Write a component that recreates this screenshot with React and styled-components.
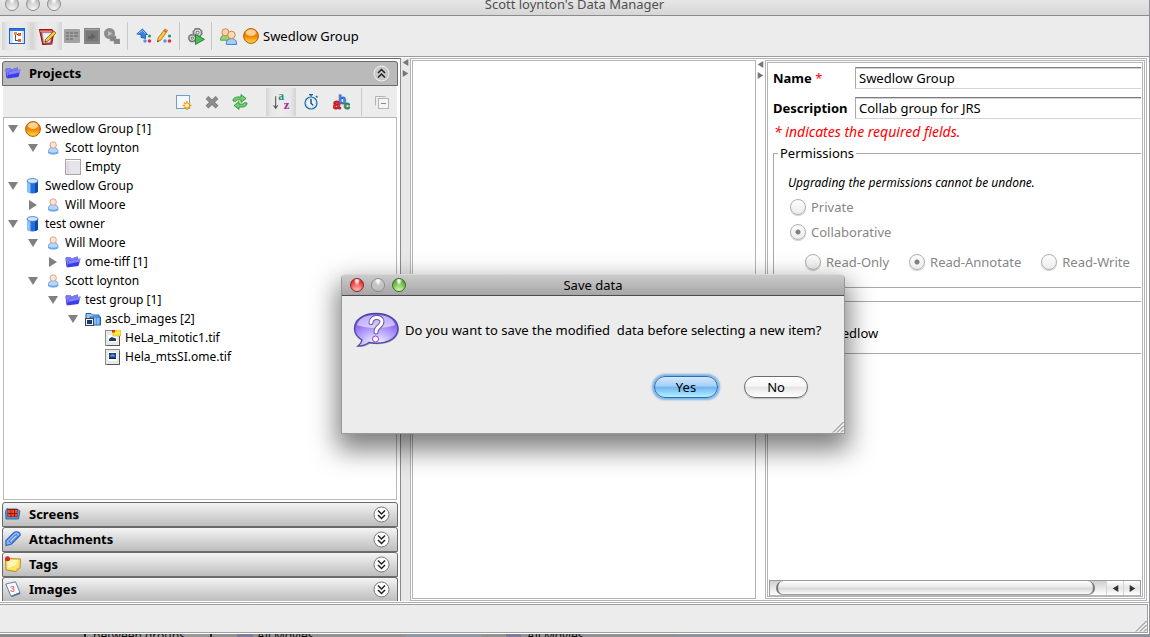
import { useState } from "react";
import styled, { createGlobalStyle } from "styled-components";

const GlobalStyle = createGlobalStyle`
  * {
    box-sizing: border-box;
  }

  body {
    margin: 0;
    background: #8f9298;
    font-family: "Noto Sans", "Open Sans", sans-serif;
    font-size: 13px;
    line-height: 18px;
    color: #000;
  }

  button,
  input {
    font: inherit;
    color: inherit;
  }
`;

const Desktop = styled.div`
  position: relative;
  display: flex;
  flex-direction: column;
  height: 100vh;
  min-height: 560px;
  overflow: hidden;
`;

const Window = styled.div`
  flex: 1;
  min-height: 0;
  display: flex;
  flex-direction: column;
  margin-right: 1px;
  background: #fff;
`;

//-------------Title bar--------------
const TitleBar = styled.header`
  display: flex;
  align-items: flex-end;
  height: 16px;
  overflow: hidden;
  background: linear-gradient(#e6e6e6, #d6d6d6);
  border-bottom: 1px solid #8c8c8c;
`;

const TitleRow = styled.div`
  flex: 1;
  display: grid;
  grid-template-columns: 64px 1fr 64px;
  align-items: center;
  height: 22px;
  color: #505050;
`;

const Title = styled.h1`
  margin: 0;
  font-size: 13px;
  font-weight: normal;
  text-align: center;
`;

const Lights = styled.div`
  display: flex;
  gap: 7px;
  padding-left: ${(p) => p.$inset};
`;

const lightColors = {
  grey: ["#f2f2f2", "#c4c4c4", "#8d8d8d"],
  off: ["#bdbdbd", "#c9c9c9", "#8a8a8a"],
  red: ["#ffb3ab", "#e8322f", "#8d2222"],
  green: ["#c9f5a0", "#5aa938", "#3a6a27"],
};

const Light = styled.button`
  flex: none;
  width: 14px;
  height: 14px;
  padding: 0;
  border: 1px solid ${(p) => lightColors[p.$tone][2]};
  border-radius: 50%;
  background: radial-gradient(
      ellipse at 50% 12%,
      rgba(255, 255, 255, 0.9) 0 12%,
      transparent 36%
    ),
    radial-gradient(
      circle at 50% 100%,
      ${(p) => lightColors[p.$tone][0]} 10%,
      ${(p) => lightColors[p.$tone][1]} 75%
    );
`;

//-------------Toolbars--------------
const MainToolbar = styled.div`
  display: flex;
  align-items: center;
  height: 41px;
  padding-left: 2px;
  background: #ececec;
  border-bottom: 1px solid #9c9c9c;
`;

const PanelToolbar = styled.div`
  display: flex;
  align-items: center;
  justify-content: flex-end;
  height: 31px;
  margin: 0 1px;
  background: #ececec;
`;

const ToolButton = styled.button`
  display: flex;
  align-items: center;
  justify-content: center;
  width: ${(p) => p.$width || "20px"};
  height: 28px;
  padding: 0;
  border: 0;
  background: ${(p) =>
    p.$pressed
      ? "linear-gradient(90deg, #d4d4d4, #e8e8e8 20%, #ececec 50%, #e8e8e8 80%, #d4d4d4)"
      : "none"};
`;

const Separator = styled.span`
  width: 1px;
  height: 28px;
  margin: 0 ${(p) => p.$after || "6px"} 0 5px;
  background: #c8c8c8;
`;

const Spacer = styled.span`
  width: 12px;
`;

const GroupName = styled.span`
  display: flex;
  align-items: center;
  gap: 4px;
  padding-left: 5px;
`;

//-------------Workspace--------------
const Workspace = styled.main`
  flex: 1;
  min-height: 0;
  display: flex;
  padding: 1px 2px 1px 0;
  border-bottom: 1px solid #b0b0b0;
`;

const LeftPane = styled.nav`
  flex: 0 0 401px;
  display: flex;
  flex-direction: column;
  padding: 3px 2px 0;
  border-right: 1px solid #8a8a8a;
  background: linear-gradient(90deg, #b4b4b4 50%, #6a6a6a 50%) top / 100% 1px no-repeat;
`;

const Divider = styled.div`
  flex: 0 0 9px;
  display: flex;
  flex-direction: column;
  align-items: center;
  gap: 4px;
  padding-top: 1px;
  background: ${(p) => p.$color};
`;

const DividerButton = styled.button`
  display: flex;
  width: 7px;
  height: 7px;
  padding: 0;
  border: 0;
  background: none;
`;

const SplitFrame = styled.div`
  flex: 1;
  min-width: 0;
  display: flex;
  padding: 1px;
  border: 1px solid #b4b4b4;
`;

const Canvas = styled.section`
  flex: 1;
  min-width: 0;
  border: 1px solid #b4b4b4;
`;

const DetailFrame = styled.section`
  flex: 0 0 380px;
  min-width: 0;
  display: flex;
  padding: 1px;
  border: 1px solid #b4b4b4;
`;

const DetailPane = styled.div`
  flex: 1;
  min-width: 0;
  display: flex;
  flex-direction: column;
  border: 1px solid #b4b4b4;
`;

//-------------Accordion--------------
const AccordionHeader = styled.button`
  flex: none;
  display: flex;
  align-items: center;
  gap: 8px;
  height: ${(p) => (p.$last ? "24px" : "25px")};
  padding: 0 7px 1px 2px;
  border: 1px solid #6a6a6a;
  border-bottom-width: ${(p) => (p.$last ? "0" : "1px")};
  border-radius: 3px 3px 0 0;
  background: ${(p) => (p.$open ? "#bababa" : "linear-gradient(#f4f4f4, #bdbdbd)")};
  font-weight: bold;
  text-align: left;
`;

const AccordionTitle = styled.span`
  flex: 1;
`;

//-------------Tree--------------
const Tree = styled.ul`
  flex: 1;
  min-height: 0;
  margin: 0 1px 2px;
  padding: 1px 0;
  overflow: hidden;
  border: 1px solid #b8b8b8;
  background: #fff;
  list-style: none;
  font-size: 12px;
`;

const TreeRow = styled.li`
  display: flex;
  align-items: center;
  height: 19px;
  padding-left: ${(p) => 4 + p.$depth * 20}px;
  white-space: nowrap;
`;

const TreeToggle = styled.button`
  display: flex;
  width: 10px;
  height: 10px;
  margin-right: 7px;
  padding: 0;
  border: 0;
  background: none;
`;

const TreeLeafGap = styled.span`
  width: 17px;
`;

const TreeLabel = styled.span`
  margin-left: 4px;
`;

//-------------Details form--------------
const Form = styled.form`
  flex: 1;
  min-height: 0;
  padding: 4px 0 0 5px;
  overflow: hidden;
`;

const FieldRow = styled.div`
  display: grid;
  grid-template-columns: 82px 1fr;
  align-items: center;
  margin-bottom: 8px;
  padding-right: 1px;
`;

const FieldLabel = styled.label`
  font-weight: bold;
`;

const Required = styled.span`
  color: #f00;
  font-weight: normal;
`;

const TextField = styled.input`
  width: 100%;
  height: 22px;
  padding: 0 3px;
  border: 1px solid #d4d4d4;
  border-top-color: #7d7d7d;
  border-left-color: #a8a8a8;
  border-right: 0;
  box-shadow: inset 0 1px #d0d0d0;
  background: #fff;
  outline: none;
`;

const Note = styled.p`
  margin: -4px 0 3px 1px;
  color: #f00;
  font-size: 14px;
  font-style: italic;
`;

const Permissions = styled.fieldset`
  min-width: 0;
  margin: 0 1px 13px 0;
  padding: 12px 0 16px 14px;
  border: 1px solid #a8a8a8;
  border-right: 0;
`;

const Legend = styled.legend`
  margin-left: -10px;
  padding: 0 2px;
`;

const Hint = styled.p`
  margin: 0 0 6px;
  font-size: 12px;
  font-style: italic;
`;

const RadioRow = styled.div`
  display: flex;
  gap: 20px;
  margin: 0 0 ${(p) => p.$gap || "0"} ${(p) => p.$indent || "2px"};
`;

const RadioLabel = styled.label`
  display: flex;
  align-items: center;
  gap: 5px;
  height: 18px;
  color: #868686;
  white-space: nowrap;
`;

const Radio = styled.input`
  appearance: none;
  width: 16px;
  height: 16px;
  margin: 0;
  border: 1px solid #b0b0b0;
  border-radius: 50%;
  background: ${(p) => (p.checked ? "radial-gradient(circle, #808080 2px, transparent 3px)," : "")}
    linear-gradient(#fdfdfd, #ececec);
  box-shadow: 0 1px 1px #ccc;
`;

const Members = styled.div`
  margin: 0 1px 0 0;
  padding: 22px 0 11px 14px;
  border: 1px solid #a8a8a8;
  border-right: 0;
`;

//-------------Scroll bar--------------
const ScrollBar = styled.div`
  display: flex;
  height: 16px;
  margin: 0 1px;
  border: 1px solid #999;
  border-bottom-color: #b8b8b8;
  background: linear-gradient(#cfcfcf, #fff);
`;

const ScrollThumb = styled.div`
  flex: 1;
  margin: 0 11px 0 6px;
  border: 1px solid #777;
  border-width: 0 2px;
  border-radius: 8px;
  background: linear-gradient(#fff, #e8e8e8 45%, #d6d6d6 50%, #fff);
  box-shadow: inset 0 -1px #a0a0a0;
`;

const ScrollButton = styled.button`
  display: flex;
  align-items: center;
  justify-content: center;
  width: 17px;
  padding: 0;
  border: 0;
  border-left: 1px solid #d4d4d4;
  background: linear-gradient(#fff, #e4e4e4 50%, #fff);
`;

//-------------Status bar--------------
const StatusBar = styled.footer`
  display: flex;
  align-items: flex-end;
  justify-content: flex-end;
  height: 29px;
  margin: 1px 1px 1px 0;
  border: 1px solid #a0a0a0;
  border-left: 0;
  background: #ececec;
`;

const BackgroundStrip = styled.div`
  display: flex;
  align-items: center;
  height: 3px;
  overflow: hidden;
  background: linear-gradient(
    90deg,
    #8a8a8a 0 84px,
    #222 84px 86px,
    #999 86px 210px,
    #222 210px 212px,
    #929292 212px 237px,
    #7f7a9c 237px 253px,
    #929292 253px 406px,
    #8f98a4 406px 482px,
    #929292 482px 506px,
    #7f7a9c 506px 521px,
    #929292 521px 675px,
    #8f949c 675px
  );
  color: #111;
  font-size: 12px;
  white-space: nowrap;
`;

const StripText = styled.span`
  flex: none;
  width: ${(p) => p.$width};
  padding-left: ${(p) => p.$inset};
`;

//-------------Dialog--------------
const Dialog = styled.section`
  position: absolute;
  top: 274px;
  left: 341px;
  width: 504px;
  border: 1px solid #989898;
  border-top-color: #d8d8d8;
  border-radius: 5px 5px 0 0;
  background: #ececec;
  box-shadow: 0 12px 26px 4px rgba(0, 0, 0, 0.5);
`;

const DialogTitle = styled.div`
  display: grid;
  grid-template-columns: 64px 1fr 64px;
  align-items: center;
  height: 21px;
  border-bottom: 1px solid #4c4c4c;
  border-radius: 4px 4px 0 0;
  background: linear-gradient(#cbcbcb, #a6a6a6);
`;

const DialogBody = styled.div`
  display: flex;
  flex-direction: column;
  padding: 15px 0 0 11px;
`;

const Message = styled.div`
  display: flex;
  align-items: center;
  gap: 5px;
  height: 38px;
  margin-bottom: 27px;
  white-space: pre;
`;

const DialogActions = styled.div`
  display: flex;
  justify-content: flex-end;
  gap: 26px;
  padding-right: 36px;
`;

const PillButton = styled.button`
  width: 64px;
  height: 22px;
  padding: 0;
  border: 1px solid ${(p) => (p.$primary ? "#2f6cb8" : "#6c6c6c")};
  border-radius: 11px;
  background: ${(p) =>
    p.$primary
      ? "linear-gradient(#d5e8fb, #a2cff8 45%, #6fb6f3 52%, #b5f0ff)"
      : "linear-gradient(#fff, #f6f6f6 45%, #e6e6e6 52%, #fff)"};
  box-shadow: ${(p) => (p.$primary ? "0 0 2px 2px #7ab4e4" : "0 1px 1px #bbb")};
  line-height: 18px;
`;

const GripCorner = styled.div`
  display: flex;
  justify-content: flex-end;
  height: 35px;
  align-items: flex-end;
`;

//-------------Icons--------------
function Icon({ size = 16, children }) {
  return (
    <svg width={size} height={size} viewBox="0 0 16 16" aria-hidden="true">
      {children}
    </svg>
  );
}

const TreeViewIcon = () => (
  <Icon>
    <rect x="0.5" y="0.5" width="15" height="15" fill="#fff" stroke="#1f5fc8" />
    <rect x="1" y="1" width="14" height="2" fill="#2f76e0" />
    <rect x="1" y="3" width="3" height="12" fill="#cfe0f8" />
    <rect x="13" y="3" width="2" height="12" fill="#cfe0f8" />
    <path d="M6.500 4v8.500M6 6.500h3M6 12.500h3" stroke="#555" fill="none" />
    <rect x="5" y="4" width="3" height="3" fill="#f09040" />
    <rect x="9" y="5" width="3" height="3" fill="#f05a28" />
    <rect x="9" y="11" width="3" height="3" fill="#f05a28" />
  </Icon>
);

const EditIcon = () => (
  <Icon size={17}>
    <path d="M0.500 1.500L12 1.500 14 4 12 15 3.500 15.500z" fill="#d8342c" stroke="#8e1a1a" />
    <path d="M3 4.500h9l-1.500 9-6 .5z" fill="#e8f1fc" stroke="#8aa7cc" strokeWidth=".6" />
    <path d="M1 3h11.500" stroke="#f4a09a" />
    <path d="M14 3l2 1.800-7.500 7.500-3 1 .8-2.800z" fill="#ffc63a" stroke="#8a5a10" strokeWidth=".8" />
    <path d="M5.500 13.300l.3-1.300 1 .9z" fill="#222" />
  </Icon>
);

const GreyGridIcon = () => (
  <Icon>
    <rect y="1" width="16" height="14" rx="1" fill="#a3a3a3" />
    <g fill="#848484">
      <path d="M2 4h3v2H2zM6 4h3v2H6zM10 4h4v2h-4zM2 7h3v2H2zM6 7h3v2H6zM10 7h4v2h-4zM2 10h3v2H2zM6 10h3v2H6z" />
    </g>
  </Icon>
);

const GreyViewerIcon = () => (
  <Icon>
    <rect width="16" height="16" fill="#858585" />
    <rect x="2" y="3" width="12" height="10" fill="#777" />
    <path d="M4 11V8h3V5l5 3.500-5 3.500v-1z" fill="#636363" />
    <path d="M1 1.500h14" stroke="#a0a0a0" />
  </Icon>
);

const GreyMovieIcon = () => (
  <Icon>
    <circle cx="5.500" cy="5.500" r="5.500" fill="#8d8d8d" />
    <path d="M4 3l4.500 2.500L4 8z" fill="#c0c0c0" />
    <path d="M6 8h6v3h4v5h-6v-3H6z" fill="#848484" stroke="#a2a2a2" strokeWidth=".5" />
  </Icon>
);

const Dots = () => (
  <>
    <circle cx="13.500" cy="8" r="1.600" fill="#22a06a" />
    <circle cx="9" cy="13" r="1.700" fill="#4a9be0" />
    <circle cx="13.500" cy="13" r="1.800" fill="#e0304c" />
  </>
);

const ImportIcon = () => (
  <Icon>
    <path d="M6.500 1l5 5.500H9.500v4l-4.500-1V6.500L0.800 6z" fill="#3a82e8" stroke="#1a50a8" strokeWidth=".8" />
    <path d="M2.500 5.200L6.500 2.500l3 3" stroke="#9cc6fa" fill="none" />
    <Dots />
  </Icon>
);

const PencilIcon = () => (
  <Icon>
    <path d="M9 1l2.500 1.500L5 12l-3.500 2L2 10z" fill="#ffc640" stroke="#a06a18" strokeWidth=".8" />
    <path d="M8 2.500l2.500 1.700" stroke="#e05040" strokeWidth="1.500" />
    <path d="M1.500 14l.3-2 1.200 1z" fill="#333" />
    <Dots />
  </Icon>
);

const GearsIcon = () => (
  <Icon size={17}>
    <g fill="#e4e4e4" stroke="#6c6c6c" strokeWidth="1.400">
      <circle cx="9" cy="4.500" r="3.800" />
      <circle cx="4" cy="9.500" r="3.200" />
    </g>
    <g fill="none" stroke="#8c8c8c" strokeWidth="1.400">
      <circle cx="9" cy="4.500" r="4.300" strokeDasharray="1.500 1.900" />
      <circle cx="4" cy="9.500" r="3.600" strokeDasharray="1.500 1.700" />
    </g>
    <g fill="#fff" stroke="#777">
      <circle cx="9" cy="4.500" r="1.400" />
      <circle cx="4" cy="9.500" r="1.100" />
    </g>
    <path d="M7 6l8.500 4.700L7 15.500z" fill="#46c052" stroke="#16752a" strokeWidth=".8" />
  </Icon>
);

const UsersIcon = () => (
  <Icon size={17}>
    <path d="M0.500 11.500c0-4 2-5 4.500-5s4.500 1 4.500 5z" fill="#9bd06a" stroke="#4f9136" strokeWidth=".8" />
    <circle cx="5" cy="4" r="3.300" fill="#fbd3a6" stroke="#c58648" strokeWidth=".9" />
    <path d="M6 15.500c-.5-4 2-5.500 4.800-5.500s5.200 1.500 4.700 5.500z" fill="#a4cdf8" stroke="#3b7fd0" strokeWidth=".9" />
    <circle cx="10.800" cy="6.500" r="3.500" fill="#fcd9b4" stroke="#c58648" strokeWidth=".9" />
  </Icon>
);

const OrbIcon = () => (
  <Icon>
    <defs>
      <linearGradient id="orb" x1="0" y1="0" x2="0" y2="1">
        <stop offset="0" stopColor="#ffa51e" />
        <stop offset=".5" stopColor="#f08000" />
        <stop offset="1" stopColor="#ffe23c" />
      </linearGradient>
    </defs>
    <circle cx="8" cy="8" r="7.400" fill="url(#orb)" stroke="#a85a10" />
    <ellipse cx="8" cy="4.800" rx="5" ry="3.200" fill="#ffe6b8" opacity=".75" />
  </Icon>
);

const FolderIcon = () => (
  <Icon>
    <path d="M1.500 13L0.500 4.500l1-1.500h3.500L6.500 4.500 12.500 2.500 13.500 6z" fill="#2a2ac8" />
    <path d="M0.500 4.500l1-1.500h3.500l1.500 1.500 6-2 .5 3-9 1.500-1.500 5.500z" fill="#7c7cf2" />
    <path d="M2 13.500L4 7 15.500 4.500 13.500 12z" fill="#3b3bf0" />
    <path d="M4 7l11.500-2.500-.8 3L3.300 10z" fill="#8484ff" />
  </Icon>
);

const NewItemIcon = () => (
  <Icon>
    <rect x="0.500" y="1.500" width="13" height="13" fill="#f2f8fe" stroke="#6f9fc8" />
    <path d="M11 7v9M6.500 11.500h9M8 8.500l6 6M14 8.500l-6 6" stroke="#f0a020" strokeWidth="1.600" />
    <circle cx="11" cy="11.500" r="2" fill="#fff4a0" />
  </Icon>
);

const CrossIcon = () => (
  <Icon>
    <path d="M3 3.500l10 9.500M13 3.500L3 13" stroke="#7c7c7c" strokeWidth="4" />
    <path d="M3 3.500l10 9.500M13 3.500L3 13" stroke="#8f8f8f" strokeWidth="2" />
  </Icon>
);

const RefreshIcon = () => (
  <Icon>
    <g fill="#6cd068" stroke="#258a30" strokeWidth=".8">
      <path d="M1 7c0-3.500 3-4.500 8-4V.5L14 4.500l-5 4V6C6 5.600 4 6 3.500 7.500z" />
      <path d="M15 9c0 3.500-3 4.500-8 4v2.500L2 11.500l5-4V10c3 .4 5 0 5.500-1.500z" />
    </g>
  </Icon>
);

const SortIcon = () => (
  <Icon size={17}>
    <path d="M2.500 3v11M0.500 11.500l2 3 2-3" stroke="#555" fill="none" />
    <text x="5" y="7" fontSize="11" fontWeight="bold" fontFamily="Liberation Serif" fill="#1a9080">
      a
    </text>
    <text x="10" y="15" fontSize="12" fontWeight="bold" fontFamily="Liberation Serif" fill="#a02a9a">
      z
    </text>
  </Icon>
);

const ClockIcon = () => (
  <Icon>
    <path d="M6 .5h4M8 .5v2M13 2l1.500 1.500" stroke="#1d5f9a" strokeWidth="1.400" />
    <circle cx="8" cy="9" r="6" fill="#e6f3fd" stroke="#1d6aa8" strokeWidth="1.200" />
    <circle cx="8" cy="9" r="4.600" fill="none" stroke="#9cc2e0" strokeDasharray="1 1.400" />
    <path d="M8 5v4.200l2.200 2.200" stroke="#223a66" fill="none" strokeWidth="1.300" />
  </Icon>
);

const AbcIcon = () => (
  <Icon size={17}>
    <g fontWeight="bold" fontFamily="Liberation Sans" strokeWidth=".8">
      <text x="5" y="10" fontSize="12" fill="#5a9cf0" stroke="#2a6cc8">
        b
      </text>
      <text x="10" y="15" fontSize="11" fill="#4caa78" stroke="#2a7a50">
        c
      </text>
      <text x="0" y="15" fontSize="13" fill="#e8323c" stroke="#b81820">
        a
      </text>
    </g>
  </Icon>
);

const CollapseIcon = () => (
  <Icon>
    <path d="M1.500 11.500v-9h10" stroke="#b4b4b4" fill="none" />
    <rect x="4.500" y="4.500" width="10" height="10" fill="#f4f4f4" stroke="#b4b4b4" />
    <path d="M7 9.500h5" stroke="#8a8a8a" />
  </Icon>
);

const UserIcon = () => (
  <Icon>
    <path d="M3.500 13c-.5-4 1.500-5.500 4.700-5.500s5.200 1.500 4.700 5.500c-2 1.500-7.500 1.500-9.400 0z" fill="#b4d8fb" stroke="#4c8ed8" strokeWidth=".8" />
    <path d="M4.500 12.500c2 1 5.500 1 7.500 0" stroke="#5a9ae8" fill="none" />
    <circle cx="8.200" cy="5" r="3.200" fill="#fde4d8" stroke="#d89070" strokeWidth=".8" />
  </Icon>
);

const EmptyIcon = () => (
  <Icon>
    <rect x="0.500" y="0.500" width="15" height="15" fill="#e4e4ea" stroke="#a6a6a6" />
    <path d="M3 1v14" stroke="#e0c0e4" />
    <path d="M1 1.500h14" stroke="#fff" />
  </Icon>
);

const DatabaseIcon = () => (
  <Icon>
    <path d="M2 3v10.500c2 2.500 9 2.500 11 0V3z" fill="#1f6fdc" />
    <path d="M2 3v10.500c.8 1 2 1.500 3.500 1.800V4z" fill="#8cc2f8" />
    <path d="M10 4v11c1.300-.3 2.400-.8 3-1.500V3z" fill="#0c4ab0" />
    <ellipse cx="7.500" cy="3" rx="5.500" ry="2.400" fill="#cfe5fb" stroke="#2a6cc4" strokeWidth=".8" />
  </Icon>
);

const DatasetIcon = () => (
  <Icon>
    <path d="M1 13V2.500h5L7.500 4H14v9z" fill="#9cc8f6" stroke="#1c5cb8" />
    <path d="M5 14V6h10.500v8z" fill="#5a9eec" stroke="#1c5cb8" />
    <path d="M7 6.500v7M10 6.500v7M13 6.500v7" stroke="#b8dafc" />
    <rect x="0.500" y="7.500" width="8" height="7" fill="#f2f2f2" stroke="#444" />
    <rect x="2" y="9" width="5" height="4" fill="#123a7a" />
  </Icon>
);

const ImageFileIcon = () => (
  <Icon>
    <rect x="0.500" y="0.500" width="14" height="15" fill="#e8e8e8" stroke="#8e8e8e" />
    <path d="M14.500 2v13.500H2" stroke="#555" fill="none" />
    <rect x="3" y="3" width="9" height="9" fill="#fff" />
    <rect x="4" y="4" width="7" height="5" fill="#1c3f86" />
    <path d="M5 6.500l2.500-1.500 2.500 1.500v1H5z" fill="#4c9cf0" />
    <path d="M4 9h7v1H4z" fill="#222" />
  </Icon>
);

const TaggedImageIcon = () => (
  <Icon>
    <rect x="0.500" y="0.500" width="14" height="15" fill="#e8e8e8" stroke="#8e8e8e" />
    <path d="M14.500 6v9.500H2" stroke="#555" fill="none" />
    <rect x="3" y="5" width="9" height="7" fill="#fff" />
    <path d="M4 9l2.500-2 4.500 1.500V11H4z" fill="#1c3f60" />
    <rect x="8" y="0" width="7.500" height="6" fill="#ffe83c" stroke="#d0a818" strokeWidth=".6" />
    <rect x="7" y="0" width="3" height="2.500" fill="#e83020" />
  </Icon>
);

const ScreenIcon = () => (
  <Icon>
    <path d="M0.500 5.500l1.500-3 1 .5h9l3 2-1.500 8H1z" fill="#4a98e0" stroke="#1c5a9c" strokeWidth=".8" />
    <rect x="2.500" y="3" width="10" height="8" fill="#8a1a10" />
    <path d="M3 4h2.500v3H3zM6.500 4H9v3H6.500zM10 4h2.200v3H10zM3 8h2.500v2.500H3zM6.500 8H9v2.500H6.500zM10 8h2.200v2.500H10z" fill="#ff4a20" />
  </Icon>
);

const ClipIcon = () => (
  <Icon>
    <path d="M1 14.500V9.500l8-8c2-1.500 7-.5 6 3L6.500 13z" fill="#8cb6f6" stroke="#2c62c8" strokeWidth="1.200" />
    <path d="M4 10.500l6.500-6.500c1.500-.5 2 .5 1.500 1.500L6 11.500z" fill="#cfe0fc" stroke="#2c62c8" />
  </Icon>
);

const TagIcon = () => (
  <Icon>
    <path d="M0.500 2.500L15.500 3l-.5 9-4 3.500-10-1.500z" fill="#ffe565" stroke="#b8862c" />
    <path d="M2 4h11l-2 5-8 3z" fill="#fff6b4" />
    <path d="M15 12l-4 3.500.5-3z" fill="#f0b030" />
    <circle cx="2.500" cy="2.700" r="2.500" fill="#e02424" />
  </Icon>
);

const PageIcon = () => (
  <Icon>
    <path d="M0.800 3L10.500 0.800 15 11.500 6 15.200z" fill="#f8fbff" stroke="#5c80a8" />
    <path d="M6 15.200l9-3.700.3 1.500-8.300 3z" fill="#446fa4" />
    <text x="5" y="11" fontSize="9" fontWeight="bold" fontFamily="Liberation Sans" fill="#f07878">
      3
    </text>
  </Icon>
);

function Chevrons({ up }) {
  return (
    <svg width="17" height="17" viewBox="0 0 17 17" aria-hidden="true">
      <circle cx="8.500" cy="8.500" r="7.500" fill={up ? "#c8c8c8" : "#fdfdfd"} stroke={up ? "#f4f4f4" : "#777"} />
      <path
        d={up ? "M5 8l3.500-3.500L12 8M5 12.500L8.500 9l3.500 3.500" : "M5 4.500L8.500 8 12 4.500M5 9l3.500 3.500L12 9"}
        stroke="#222"
        strokeWidth="1.500"
        fill="none"
      />
    </svg>
  );
}

function Arrow({ dir, size = 7, color = "#777" }) {
  const paths = {
    left: "M9 0v10L1 5z",
    right: "M1 0v10l8-5z",
    down: "M0 1h10L5 9z",
  };
  return (
    <svg width={size} height={size} viewBox="0 0 10 10" aria-hidden="true">
      <path d={paths[dir]} fill={color} />
    </svg>
  );
}

function Grip() {
  return (
    <svg width="12" height="12" viewBox="0 0 12 12" aria-hidden="true">
      <path d="M1 11.500L11.500 1M5 11.500L11.500 5M9 11.500L11.500 9" stroke="#777" />
    </svg>
  );
}

function QuestionBubble() {
  return (
    <svg width="47" height="38" viewBox="0 0 47 38" aria-hidden="true">
      <defs>
        <radialGradient id="bubble" cx=".5" cy=".95" r=".8">
          <stop offset="0" stopColor="#fff" />
          <stop offset=".45" stopColor="#c3b4ff" />
          <stop offset="1" stopColor="#8158f4" />
        </radialGradient>
      </defs>
      <path
        d="M24 4C11 4 2.500 10 2.500 18.500c0 5 3 9 7.500 11.500-.5 3-2 4.500-4 6 5 0 8.500-1.500 11-3.500 16 3 29-3.500 29-14C46 10 37 4 24 4z"
        fill="#555"
        opacity=".45"
      />
      <path
        d="M23 2.500C10 2.500 1.500 9 1.500 17.500c0 5 3 9 7.500 11.500-.5 3-2 4.500-4 6 5 0 8.500-1.500 11-3.500 16 3 29-3.500 29-14C45 9 36 2.500 23 2.500z"
        fill="url(#bubble)"
        stroke="#4c4aa0"
        strokeWidth="1.400"
      />
      <path d="M23 4C12 4 5 8 4 14c8 4 30 4 38 0C41 8 34 4 23 4z" fill="#fff" opacity=".55" />
      <path
        d="M18 11.500c0-6.500 11-6.500 11-1 0 5-6 5-6 10.500"
        fill="none"
        stroke="#6656a8"
        strokeWidth="5"
        strokeLinecap="round"
      />
      <path
        d="M18 11.500c0-6.500 11-6.500 11-1 0 5-6 5-6 10.500"
        fill="none"
        stroke="#fff"
        strokeWidth="3"
        strokeLinecap="round"
      />
      <circle cx="22.500" cy="28" r="3" fill="#fff" stroke="#9038e8" />
    </svg>
  );
}

const treeItems = [
  { depth: 0, arrow: "down", icon: OrbIcon, label: "Swedlow Group [1]" },
  { depth: 1, arrow: "down", icon: UserIcon, label: "Scott loynton" },
  { depth: 2, icon: EmptyIcon, label: "Empty" },
  { depth: 0, arrow: "down", icon: DatabaseIcon, label: "Swedlow Group" },
  { depth: 1, arrow: "right", icon: UserIcon, label: "Will Moore" },
  { depth: 0, arrow: "down", icon: DatabaseIcon, label: "test owner" },
  { depth: 1, arrow: "down", icon: UserIcon, label: "Will Moore" },
  { depth: 2, arrow: "right", icon: FolderIcon, label: "ome-tiff [1]" },
  { depth: 1, arrow: "down", icon: UserIcon, label: "Scott loynton" },
  { depth: 2, arrow: "down", icon: FolderIcon, label: "test group [1]" },
  { depth: 3, arrow: "down", icon: DatasetIcon, label: "ascb_images [2]" },
  { depth: 4, icon: TaggedImageIcon, label: "HeLa_mitotic1.tif" },
  { depth: 4, icon: ImageFileIcon, label: "Hela_mtsSI.ome.tif" },
];

const closedPanels = [
  { title: "Screens", icon: ScreenIcon },
  { title: "Attachments", icon: ClipIcon },
  { title: "Tags", icon: TagIcon },
  { title: "Images", icon: PageIcon },
];

function Toolbar() {
  return (
    <MainToolbar>
      <ToolButton $width="30px" $pressed aria-label="Show tree"><TreeViewIcon /></ToolButton>
      <ToolButton $width="30px" $pressed aria-label="Edit"><EditIcon /></ToolButton>
      <ToolButton disabled aria-label="Thumbnails"><GreyGridIcon /></ToolButton>
      <ToolButton disabled aria-label="Viewer"><GreyViewerIcon /></ToolButton>
      <ToolButton disabled aria-label="Movie"><GreyMovieIcon /></ToolButton>
      <Separator />
      <ToolButton aria-label="Import"><ImportIcon /></ToolButton>
      <ToolButton aria-label="Annotate"><PencilIcon /></ToolButton>
      <Separator />
      <ToolButton aria-label="Run script"><GearsIcon /></ToolButton>
      <Separator />
      <ToolButton aria-label="Switch group"><UsersIcon /></ToolButton>
      <GroupName>
        <OrbIcon />
        Swedlow Group
      </GroupName>
    </MainToolbar>
  );
}

function Browser() {
  return (
    <LeftPane>
      <AccordionHeader $open aria-expanded="true">
        <FolderIcon />
        <AccordionTitle>Projects</AccordionTitle>
        <Chevrons up />
      </AccordionHeader>
      <PanelToolbar>
        <ToolButton $width="28px" aria-label="New"><NewItemIcon /></ToolButton>
        <ToolButton $width="28px" aria-label="Delete"><CrossIcon /></ToolButton>
        <ToolButton $width="28px" aria-label="Refresh"><RefreshIcon /></ToolButton>
        <Spacer />
        <ToolButton $width="30px" $pressed aria-label="Sort by name"><SortIcon /></ToolButton>
        <ToolButton $width="30px" aria-label="Sort by date"><ClockIcon /></ToolButton>
        <ToolButton $width="30px" aria-label="Filter by text"><AbcIcon /></ToolButton>
        <Separator $after="5px" />
        <ToolButton $width="30px" aria-label="Collapse all"><CollapseIcon /></ToolButton>
      </PanelToolbar>
      <Tree>
        {treeItems.map(({ depth, arrow, icon: ItemIcon, label }, index) => (
          <TreeRow key={index} $depth={depth}>
            {arrow ? (
              <TreeToggle aria-label={label}>
                <Arrow dir={arrow} size={10} color="#808080" />
              </TreeToggle>
            ) : (
              <TreeLeafGap />
            )}
            <ItemIcon />
            <TreeLabel>{label}</TreeLabel>
          </TreeRow>
        ))}
      </Tree>
      {closedPanels.map(({ title, icon: PanelIcon }, index) => (
        <AccordionHeader key={title} $last={index === closedPanels.length - 1} aria-expanded="false">
          <PanelIcon />
          <AccordionTitle>{title}</AccordionTitle>
          <Chevrons />
        </AccordionHeader>
      ))}
    </LeftPane>
  );
}

function SplitDivider({ color }) {
  return (
    <Divider $color={color}>
      <DividerButton aria-label="Collapse left"><Arrow dir="left" /></DividerButton>
      <DividerButton aria-label="Collapse right"><Arrow dir="right" /></DividerButton>
    </Divider>
  );
}

function RadioOption({ name, label, checked = false }) {
  return (
    <RadioLabel>
      <Radio type="radio" name={name} checked={checked} disabled readOnly />
      {label}
    </RadioLabel>
  );
}

function GroupDetails() {
  return (
    <DetailFrame>
      <DetailPane>
        <Form>
          <FieldRow>
            <FieldLabel htmlFor="group-name">
              Name <Required>*</Required>
            </FieldLabel>
            <TextField id="group-name" defaultValue="Swedlow Group" />
          </FieldRow>
          <FieldRow>
            <FieldLabel htmlFor="group-description">Description</FieldLabel>
            <TextField id="group-description" defaultValue="Collab group for JRS" />
          </FieldRow>
          <Note>* indicates the required fields.</Note>
          <Permissions>
            <Legend>Permissions</Legend>
            <Hint>Upgrading the permissions cannot be undone.</Hint>
            <RadioRow $gap="7px">
              <RadioOption name="access" label="Private" />
            </RadioRow>
            <RadioRow $gap="12px">
              <RadioOption name="access" label="Collaborative" checked />
            </RadioRow>
            <RadioRow $indent="17px">
              <RadioOption name="level" label="Read-Only" />
              <RadioOption name="level" label="Read-Annotate" checked />
              <RadioOption name="level" label="Read-Write" />
            </RadioRow>
          </Permissions>
          <Members>Jason Swedlow</Members>
        </Form>
        <ScrollBar>
          <ScrollThumb />
          <ScrollButton aria-label="Scroll left"><Arrow dir="left" color="#333" /></ScrollButton>
          <ScrollButton aria-label="Scroll right"><Arrow dir="right" color="#333" /></ScrollButton>
        </ScrollBar>
      </DetailPane>
    </DetailFrame>
  );
}

function SaveDialog({ onClose }) {
  return (
    <Dialog role="dialog" aria-labelledby="save-title">
      <DialogTitle>
        <Lights $inset="8px">
          <Light $tone="red" aria-label="Close" onClick={onClose} />
          <Light $tone="off" aria-label="Minimize" disabled />
          <Light $tone="green" aria-label="Zoom" />
        </Lights>
        <Title as="h2" id="save-title">Save data</Title>
      </DialogTitle>
      <DialogBody>
        <Message>
          <QuestionBubble />
          {"Do you want to save the modified  data before selecting a new item?"}
        </Message>
        <DialogActions>
          <PillButton $primary onClick={onClose}>Yes</PillButton>
          <PillButton onClick={onClose}>No</PillButton>
        </DialogActions>
        <GripCorner>
          <Grip />
        </GripCorner>
      </DialogBody>
    </Dialog>
  );
}

function App() {
  const [asking, setAsking] = useState(true);

  return (
    <>
      <GlobalStyle />
      <Desktop>
        <Window>
          <TitleBar>
            <TitleRow>
              <Lights $inset="5px">
                <Light $tone="grey" aria-label="Close window" />
                <Light $tone="grey" aria-label="Minimize window" />
                <Light $tone="grey" aria-label="Zoom window" />
              </Lights>
              <Title>Scott loynton's Data Manager</Title>
            </TitleRow>
          </TitleBar>
          <Toolbar />
          <Workspace>
            <Browser />
            <SplitDivider color="#e8e8e8" />
            <SplitFrame>
              <Canvas />
              <SplitDivider color="#fff" />
              <GroupDetails />
            </SplitFrame>
          </Workspace>
          <StatusBar>
            <Grip />
          </StatusBar>
        </Window>
        <BackgroundStrip>
          <StripText $width="257px" $inset="93px">between groups</StripText>
          <StripText $width="270px" $inset="0">All Movies</StripText>
          <StripText $width="100px" $inset="0">All Movies</StripText>
        </BackgroundStrip>
        {asking && <SaveDialog onClose={() => setAsking(false)} />}
      </Desktop>
    </>
  );
}

export default App;
